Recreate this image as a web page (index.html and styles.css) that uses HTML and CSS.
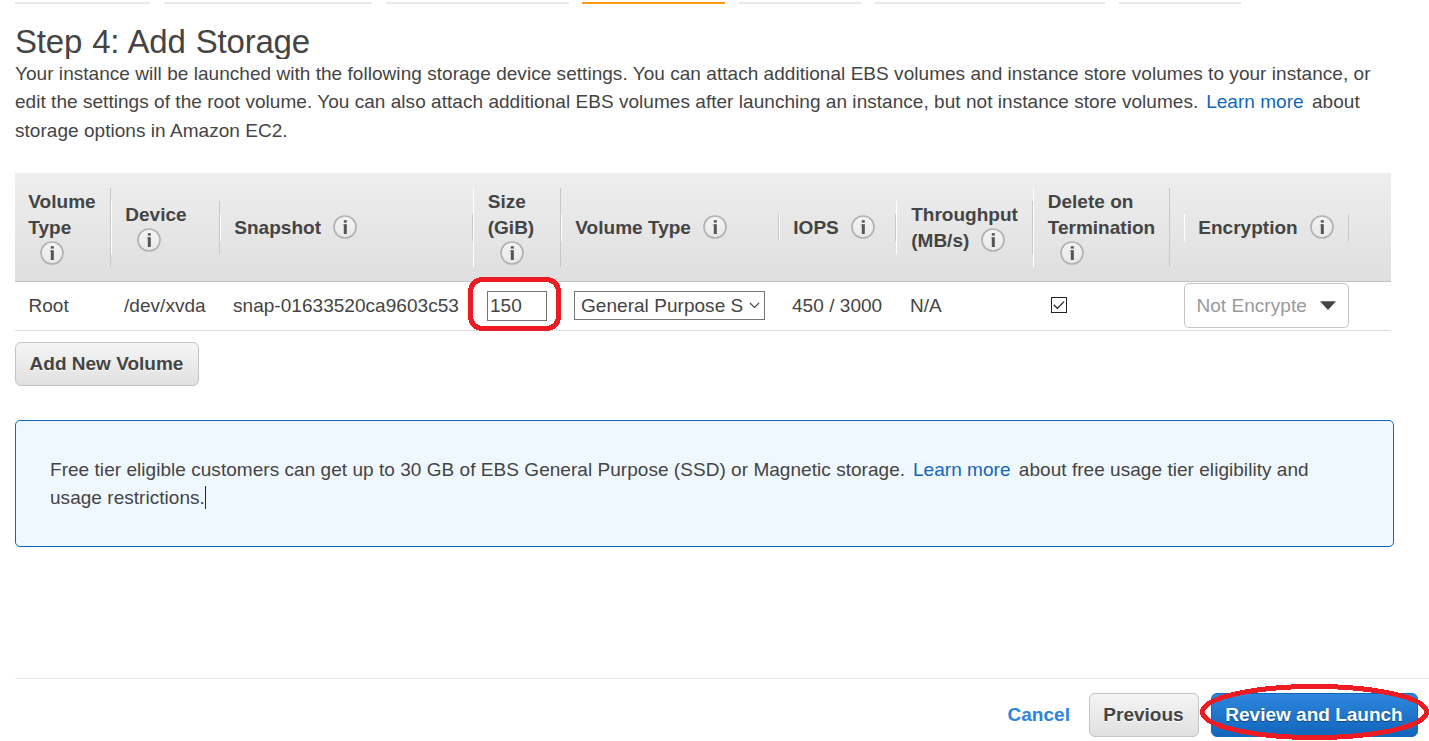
FILE: index.html
```html
<!DOCTYPE html>
<html lang="en">
<head>
<meta charset="utf-8">
<title>Step 4: Add Storage</title>
<link rel="stylesheet" href="styles.css">
</head>
<body>
<svg class="defs" width="0" height="0">
  <defs>
    <linearGradient id="infoFill" x1="0" y1="0" x2="0" y2="1"><stop offset="0" stop-color="#f4f4f4"/><stop offset="1" stop-color="#e9e9e9"/></linearGradient>
    <symbol id="info" viewBox="0 0 24 24">
      <circle cx="12" cy="12" r="11" fill="url(#infoFill)" stroke="#b2b2b2" stroke-width="1.7"/>
      <rect x="10.8" y="5.2" width="3" height="2.4" fill="#555"/>
      <rect x="10.8" y="9.2" width="3" height="9.8" fill="#555"/>
      <rect x="9.8" y="9.2" width="1" height="1.5" fill="#999"/>
    </symbol>
  </defs>
</svg>
<div class="page">
  <nav class="steps">
    <i class="s1"></i><i class="s2"></i><i class="s3"></i><i class="s4 active"></i><i class="s5"></i><i class="s6"></i><i class="s7"></i>
  </nav>
  <h1 class="title">Step 4: Add Storage</h1>
  <p class="intro">Your instance will be launched with the following storage device settings. You can attach additional EBS volumes and instance store volumes to your instance, or<br>edit the settings of the root volume. You can also attach additional EBS volumes after launching an instance, but not instance store volumes. <a class="link">Learn more</a> about<br>storage options in Amazon EC2.</p>

  <section class="table">
    <div class="row head">
      <div class="th first">Volume<br>Type<br><svg class="info"><use href="#info"/></svg></div>
      <div class="th">Device<br><svg class="info"><use href="#info"/></svg></div>
      <div class="th">Snapshot<svg class="info"><use href="#info"/></svg></div>
      <div class="th wide">Size<br>(GiB)<br><svg class="info"><use href="#info"/></svg></div>
      <div class="th">Volume Type<svg class="info"><use href="#info"/></svg></div>
      <div class="th">IOPS<svg class="info"><use href="#info"/></svg></div>
      <div class="th thr">Throughput<br>(MB/s)<svg class="info"><use href="#info"/></svg></div>
      <div class="th wide">Delete on<br>Termination<br><svg class="info"><use href="#info"/></svg></div>
      <div class="th enc">Encryption<svg class="info"><use href="#info"/></svg></div>
    </div>
    <div class="row body">
      <div class="td root">Root</div>
      <div class="td">/dev/xvda</div>
      <div class="td">snap-01633520ca9603c53</div>
      <div class="td size">
        <div class="field">150</div>
        <svg class="mark-size" width="93" height="54"><rect x="2.5" y="2.5" width="88" height="49" rx="12"/></svg>
      </div>
      <div class="td"><div class="select"><span>General Purpose S</span><svg width="11" height="7"><path d="M1 1l4.5 4.5L10 1" fill="none" stroke="#444" stroke-width="1.1"/></svg></div></div>
      <div class="td">450 / 3000</div>
      <div class="td na">N/A</div>
      <div class="td del"><svg class="check" width="16" height="16"><rect x=".5" y=".5" width="15" height="15" fill="#fff" stroke="#222"/><path d="M2.8 7.8l3.5 3.6 6.8-6.8" fill="none" stroke="#222" stroke-width="1.3"/></svg></div>
      <div class="td encbox"><div class="combo"><span>Not Encrypte</span><svg width="16" height="9"><path d="M0 0.3H16L8 9z" fill="#444"/></svg></div></div>
    </div>
  </section>

  <button class="btn add">Add New Volume</button>

  <section class="notice">Free tier eligible customers can get up to 30 GB of EBS General Purpose (SSD) or Magnetic storage. <a class="link">Learn more</a> about free usage tier eligibility and<br>usage restrictions.<span class="caret"></span></section>

  <footer class="footer">
    <a class="cancel">Cancel</a>
    <button class="btn prev">Previous</button>
    <div class="launch-wrap">
      <button class="btn launch">Review and Launch</button>
      <svg class="mark-launch" width="229" height="56"><ellipse cx="114.5" cy="28" rx="112" ry="25.5"/></svg>
    </div>
  </footer>
</div>
</body>
</html>
```
FILE: styles.css
```css
* { box-sizing: border-box; }
body {
  margin: 0;
  background: #fff;
  color: #444;
  font: 19px/28.5px "Liberation Sans", Arial, sans-serif;
  letter-spacing: .04px;
  overflow: hidden;
}
.defs { position: absolute; }
.page { width: 1429px; height: 741px; padding-left: 15px; display: flex; flex-direction: column; }

.steps { display: flex; gap: 14px; padding-top: 2px; height: 4px; flex: none; }
.steps i { height: 2px; background: #eaeaea; }
.steps .active { background: #ff9917; }
.s1 { width: 135px; }
.s2 { width: 208px; }
.s3 { width: 183px; }
.steps .s4 { width: 143px; margin-left: -1px; }
.s5 { width: 122px; }
.s6 { width: 230px; }
.s7 { width: 122px; }

.title { margin: 20px 0 0; height: 35px; line-height: 35px; font-size: 33px; font-weight: 400; letter-spacing: -.18px; word-spacing: 1px; overflow: hidden; flex: none; white-space: nowrap; }
.intro { margin: 0; padding-top: .5px; height: 114px; flex: none; white-space: nowrap; }
.link { color: #1166bb; margin: 0 3px 0 2.5px; }

.table { width: 1376px; flex: none; }
.row { display: grid; grid-template-columns: 96px 109px 253px 88px 218px 117px 137px 137px 14px 165px; }
.head {
  height: 109px;
  align-items: center;
  background: linear-gradient(#eeeeee, #dfdfdf);
  border-bottom: 1px solid #c2c2c2;
  font-weight: 700;
  line-height: 26px;
  letter-spacing: .02px;
}
.th { padding: .5px 0 0 13.3px; margin-bottom: -.5px; border-left: 1px solid #fff; border-right: 1px solid #c8c8c8; white-space: nowrap; }
.th.first { border-left: 0; }
.th.wide { padding-left: 13.7px; }
.th.thr { padding-left: 14.2px; }
.th.enc { grid-column: 10; }
.info { width: 24px; height: 24px; margin-left: 12px; vertical-align: top; margin-top: .5px; }
.thr .info { margin-left: 11.4px; }
.body { height: 49px; align-items: center; border-bottom: 1px solid #ddd; }
.td { padding-left: 13px; white-space: nowrap; }
.td.root { padding-left: 13.5px; }
.td.na { padding-left: 14px; }
.size { position: relative; }
.field { width: 60px; height: 30px; margin-left: 1px; border: 1px solid #767676; padding-left: 2px; line-height: 28px; }
.mark-size { position: absolute; left: -5px; top: -14px; fill: none; stroke: #ed1c24; stroke-width: 5; shape-rendering: crispEdges; }
.select { width: 191px; height: 29px; margin-bottom: 1px; border: 1px solid #767676; padding: 0 4px 0 6px; display: flex; align-items: center; justify-content: space-between; }
.select span, .combo span { padding-top: 1px; }
.td.del { padding: 0 0 2px 18px; display: flex; }
.td.encbox { grid-column: 10; padding: 0 0 1px; }
.combo { width: 165px; height: 45px; border: 1px solid #c4c4c4; border-radius: 5px; display: flex; align-items: center; justify-content: space-between; padding: 0 12px 0 11.5px; color: #999; }
.combo span { width: 109px; overflow: hidden; }

.btn { font: 700 19px/28px "Liberation Sans", Arial, sans-serif; color: #444; height: 44px; padding: 0 1px 0 0; border: 1px solid #c4c4c4; border-radius: 6px; background: linear-gradient(#f5f5f5, #e0e0e0); text-shadow: 0 1px 0 #fff; white-space: nowrap; flex: none; }
.add { width: 184px; margin-top: 11px; }
.notice { width: 1379px; height: 127px; margin-top: 34px; padding: 35px 34px; line-height: 28px; border: 1px solid #1166bb; border-radius: 5px; background: #f0f8ff; white-space: nowrap; flex: none; }
.caret { display: inline-block; width: 1px; height: 23px; background: #222; vertical-align: -5px; }

.footer { margin-top: 131px; height: 63px; border-top: 1px solid #eaeaea; padding: 14px 11px 0 0; display: flex; justify-content: flex-end; align-items: flex-start; flex: none; }
.cancel { color: #2e83dc; font-weight: 700; line-height: 43px; margin-right: 19px; }
.prev { width: 110px; margin-right: 12px; }
.launch-wrap { position: relative; height: 44px; display: flex; }
.launch { width: 207px; color: #fff; border-color: #1166bb; background: linear-gradient(#2e86de, #1166bb); text-shadow: 0 1px 1px #0a4480; }
.mark-launch { position: absolute; left: -11px; top: -9px; fill: none; stroke: #ed1c24; stroke-width: 5; shape-rendering: crispEdges; }
```
